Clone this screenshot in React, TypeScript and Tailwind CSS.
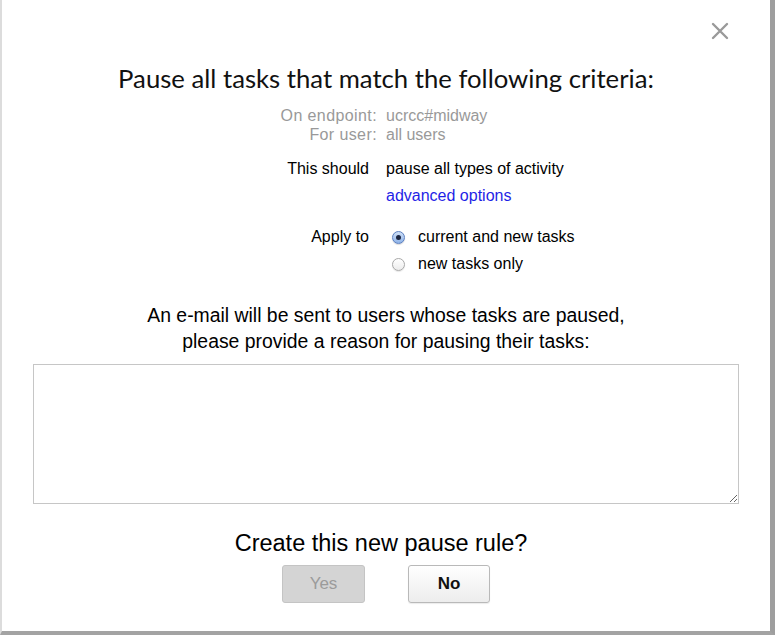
import { useState } from 'react';

// Radio button drawn to look like the old OS X style control
function Radio({ checked }: { checked: boolean }) {
  return checked ? (
    <span className="flex h-[13px] w-[13px] items-center justify-center rounded-full border border-[#5b7fc0] bg-gradient-to-b from-[#cfe0f7] to-[#8fb3e8] shadow-[0_1px_1px_rgba(0,0,0,0.15)]">
      <span className="h-[5px] w-[5px] rounded-full bg-[#1c2640]" />
    </span>
  ) : (
    <span className="h-[13px] w-[13px] rounded-full border border-[#a8a8a8] bg-gradient-to-b from-white to-[#ececec] shadow-[0_1px_1px_rgba(0,0,0,0.1)]" />
  );
}

export default function App() {
  const [applyTo, setApplyTo] = useState<'all' | 'new'>('all');
  const [reason, setReason] = useState('');

  return (
    <div className="h-[635px] w-[775px] overflow-hidden border-l-2 border-r-[5px] border-b-4 border-l-[#dcdcdc] border-r-[#9e9e9e] border-b-[#a3a3a3] bg-white font-['Liberation_Sans',Arial,sans-serif] text-black">
      {/* Close */}
      <div className="flex justify-end pr-[41px] pt-[22px]">
        <button aria-label="Close" className="h-[18px] w-[18px] text-[#9a9a9a]">
          <svg viewBox="0 0 18 18" className="h-[18px] w-[18px]" stroke="currentColor" strokeWidth="2.4" strokeLinecap="round">
            <path d="M2 2 16 16M16 2 2 16" />
          </svg>
        </button>
      </div>

      {/* Title */}
      <h1 className="mt-[23px] text-center font-['Lato',sans-serif] text-[25.7px] leading-[30px] text-[#111]">
        Pause all tasks that match the following criteria:
      </h1>

      {/* Criteria */}
      <div className="mt-[13px] grid grid-cols-[384px_1fr] text-[16px] leading-[19px] text-[#999]">
        <span className="pr-[9px] text-right tracking-[0.4px]">On endpoint:</span>
        <span>ucrcc#midway</span>
        <span className="pr-[9px] text-right tracking-[0.4px]">For user:</span>
        <span>all users</span>
      </div>

      <div className="mt-[15px] grid grid-cols-[384px_1fr] text-[16px] leading-[20px]">
        <span className="pr-[17px] text-right">This should</span>
        <span>pause all types of activity</span>
        <span />
        <a href="#" className="mt-[7px] text-[#1f1fe6]">advanced options</a>
      </div>

      <div className="mt-[21px] grid grid-cols-[384px_1fr] text-[16px] leading-[20px]">
        <span className="pr-[17px] text-right">Apply to</span>
        <label className="flex items-center gap-[13px] pl-[6px]" onClick={() => setApplyTo('all')}>
          <Radio checked={applyTo === 'all'} />
          <span>current and new tasks</span>
        </label>
        <span />
        <label className="mt-[7px] flex items-center gap-[13px] pl-[6px]" onClick={() => setApplyTo('new')}>
          <Radio checked={applyTo === 'new'} />
          <span>new tasks only</span>
        </label>
      </div>

      {/* Reason */}
      <p className="mt-[28px] text-center text-[19.4px] leading-[26px]">
        An e-mail will be sent to users whose tasks are paused,
        <br />
        please provide a reason for pausing their tasks:
      </p>
      <textarea
        value={reason}
        onChange={(e) => setReason(e.target.value)}
        className="ml-[31px] mt-[10px] block h-[140px] w-[706px] border border-[#c6c6c6] p-1 text-[15px] outline-none"
      />

      {/* Confirm */}
      <p className="mt-[25px] pr-[10px] text-center text-[23.5px] leading-[28px]">Create this new pause rule?</p>
      <div className="mt-[8px] flex justify-center gap-[43px]">
        <button
          disabled
          className="h-[38px] w-[83px] rounded-[3px] border border-[#c4c4c4] bg-[#d4d4d4] text-[17px] text-[#9b9b9b]"
        >
          Yes
        </button>
        <button className="h-[38px] w-[82px] rounded-[3px] border border-[#b9b9b9] bg-gradient-to-b from-white to-[#ededed] text-[17px] font-semibold text-[#111] shadow-[0_1px_1px_rgba(0,0,0,0.08)]">
          No
        </button>
      </div>
    </div>
  );
}
